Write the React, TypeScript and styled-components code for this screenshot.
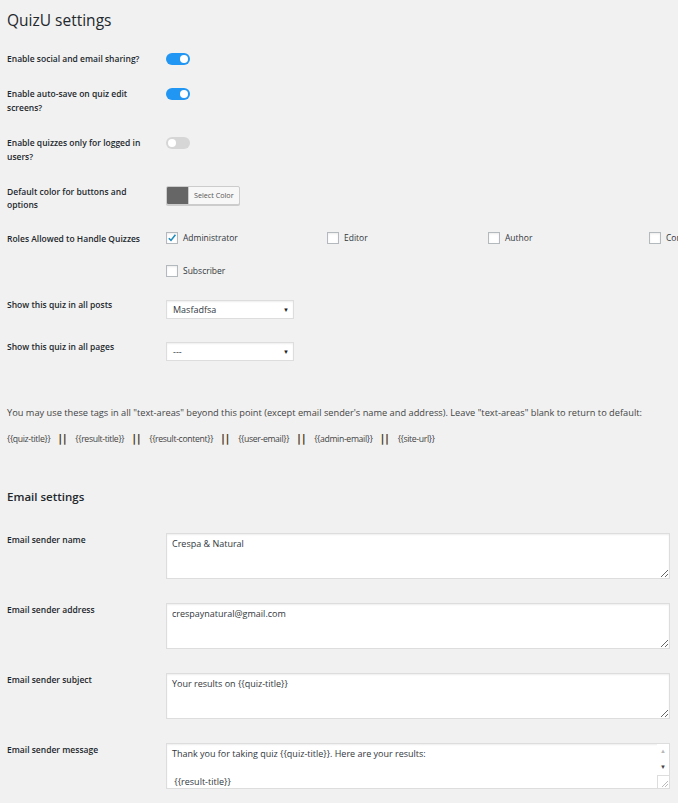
import React from 'react';
import styled, { createGlobalStyle } from 'styled-components';

const GlobalStyle = createGlobalStyle`
  html, body {
    margin: 0;
    padding: 0;
    background: #f1f1f1;
    overflow: hidden;
  }
  body {
    font-family: 'Open Sans', 'Noto Sans', sans-serif;
    color: #444;
  }
`;

const Page = styled.div`
  width: 700px;
  padding: 0 0 0 7px;
`;

const Title = styled.h1`
  margin: 0;
  padding-top: 8px;
  font-size: 15.5px;
  line-height: 24px;
  font-weight: 400;
  color: #23282d;
`;

const Form = styled.div`
  display: flex;
  flex-direction: column;
  gap: 21px;
  margin-top: 20px;
`;

const Row = styled.div`
  display: grid;
  grid-template-columns: 159px 1fr;
  align-items: start;
`;

const Label = styled.div<{ $tight?: boolean }>`
  font-size: 8.5px;
  line-height: ${(p) => (p.$tight ? '13px' : '14px')};
  font-weight: 600;
  color: #23282d;
  padding-right: 10px;
`;

const Toggle = styled.span<{ $on?: boolean }>`
  position: relative;
  display: block;
  width: 24px;
  height: 12px;
  margin-top: 1px;
  border-radius: 6px;
  background: ${(p) => (p.$on ? '#2196f3' : '#d6d6d6')};

  &::after {
    content: '';
    position: absolute;
    top: 2px;
    left: ${(p) => (p.$on ? '14px' : '2px')};
    width: 8px;
    height: 8px;
    border-radius: 50%;
    background: #fff;
  }
`;

const ColorButton = styled.div`
  display: inline-flex;
  align-items: stretch;
  height: 17px;
  margin-top: 1px;
  border: 1px solid #ccc;
  border-radius: 2px;
  background: #f7f7f7;
  box-shadow: 0 1px 0 #ccc;
  overflow: hidden;
`;

const Swatch = styled.span`
  width: 21px;
  background: #666;
`;

const ColorText = styled.span`
  padding: 0 5px;
  font-size: 7.2px;
  line-height: 17px;
  color: #555;
  border-left: 1px solid #ccc;
`;

const RoleGrid = styled.div`
  display: grid;
  grid-template-columns: repeat(4, 161px);
  row-gap: 21px;
`;

const Role = styled.label`
  display: flex;
  align-items: center;
  gap: 5px;
  font-size: 8.5px;
  line-height: 12px;
  color: #32373c;
  white-space: nowrap;
`;

const Box = styled.span`
  position: relative;
  width: 10px;
  height: 10px;
  border: 1px solid #b4b9be;
  background: #fff;
  box-shadow: inset 0 1px 2px rgba(0, 0, 0, 0.08);
`;

const Check = styled.svg`
  position: absolute;
  left: 0;
  top: 0;
`;

const Select = styled.div`
  display: flex;
  align-items: center;
  justify-content: space-between;
  box-sizing: border-box;
  width: 128px;
  height: 19px;
  margin-top: 2px;
  padding: 0 4px 0 6px;
  background: #fff;
  border: 1px solid #ddd;
  box-shadow: inset 0 1px 2px rgba(0, 0, 0, 0.07);
  font-size: 9px;
  color: #32373c;

  &::after {
    content: '▼';
    font-size: 6px;
    color: #222;
  }
`;

const Note = styled.p`
  margin: 45px 0 0;
  font-size: 9.25px;
  line-height: 14px;
  color: #444;
  white-space: nowrap;
`;

const Tags = styled.div`
  display: flex;
  align-items: center;
  gap: 8px;
  margin-top: 12px;
  font-size: 8.7px;
  letter-spacing: -0.35px;
  line-height: 14px;
  color: #444;
`;

const Bar = styled.b`
  font-family: 'DejaVu Sans', sans-serif;
  font-size: 11px;
  letter-spacing: 0.5px;
  font-weight: 700;
  color: #4d4124;
`;

const Heading = styled.h2`
  margin: 44px 0 0;
  font-size: 11.5px;
  line-height: 14px;
  font-weight: 600;
  color: #23282d;
`;

const EmailForm = styled.div`
  display: flex;
  flex-direction: column;
  gap: 24px;
  margin-top: 29px;
`;

const AreaWrap = styled.div`
  position: relative;
  width: 504px;
  height: 46px;
`;

const Area = styled.textarea`
  display: block;
  box-sizing: border-box;
  width: 504px;
  height: 46px;
  margin: 0;
  padding: 3px 5px;
  border: 1px solid #ddd;
  border-radius: 0;
  background: #fff;
  box-shadow: inset 0 1px 2px rgba(0, 0, 0, 0.07);
  font-family: 'Open Sans', 'Noto Sans', sans-serif;
  font-size: 9px;
  line-height: 14px;
  color: #32373c;
  overflow: hidden;
  resize: vertical;
`;

/* narrow scrollbar drawn over the message box */
const ScrollBar = styled.div`
  position: absolute;
  top: 1px;
  right: 1px;
  bottom: 1px;
  width: 12px;
  display: flex;
  flex-direction: column;
  align-items: center;
  background: #fff;
  font-size: 6px;
  line-height: 8px;
`;

const Arrow = styled.span<{ $dark?: boolean }>`
  margin-top: ${(p) => (p.$dark ? '8px' : '3px')};
  color: ${(p) => (p.$dark ? '#444' : '#b8b8b8')};
`;

const Corner = styled.span`
  margin-top: auto;
  width: 11px;
  height: 12px;
  border-top: 1px solid #ddd;
  border-left: 1px solid #ddd;
  background: #fff;
  display: flex;
  align-items: flex-end;
  justify-content: flex-end;
`;

const roles = ['Administrator', 'Editor', 'Author', 'Contributor', 'Subscriber'];
const tags = ['{{quiz-title}}', '{{result-title}}', '{{result-content}}', '{{user-email}}', '{{admin-email}}', '{{site-url}}'];

const App = (): JSX.Element => {
  return (
    <Page>
      <GlobalStyle />
      <Title>QuizU settings</Title>
      <Form>
        <Row>
          <Label>Enable social and email sharing?</Label>
          <Toggle $on />
        </Row>
        <Row>
          <Label>Enable auto-save on quiz edit screens?</Label>
          <Toggle $on />
        </Row>
        <Row>
          <Label>Enable quizzes only for logged in users?</Label>
          <Toggle />
        </Row>
        <Row>
          <Label $tight>Default color for buttons and options</Label>
          <div>
            <ColorButton>
              <Swatch />
              <ColorText>Select Color</ColorText>
            </ColorButton>
          </div>
        </Row>
        <Row>
          <Label>Roles Allowed to Handle Quizzes</Label>
          <RoleGrid>
            {roles.map((r) => (
              <Role key={r}>
                <Box>
                  {r === 'Administrator' && (
                    <Check width="10" height="10" viewBox="0 0 10 10">
                      <path d="M1.8 5.2 L4 7.4 L8.4 1.8" fill="none" stroke="#1e8cbe" strokeWidth="1.6" />
                    </Check>
                  )}
                </Box>
                {r}
              </Role>
            ))}
          </RoleGrid>
        </Row>
        <Row>
          <Label>Show this quiz in all posts</Label>
          <Select>Masfadfsa</Select>
        </Row>
        <Row>
          <Label>Show this quiz in all pages</Label>
          <Select>---</Select>
        </Row>
      </Form>
      <Note>
        You may use these tags in all "text-areas" beyond this point (except email sender's name and address). Leave "text-areas" blank to return to default:
      </Note>
      <Tags>
        {tags.map((t, i) => (
          <React.Fragment key={t}>
            {i > 0 && <Bar>||</Bar>}
            <span>{t}</span>
          </React.Fragment>
        ))}
      </Tags>
      <Heading>Email settings</Heading>
      <EmailForm>
        <Row>
          <Label>Email sender name</Label>
          <Area defaultValue="Crespa & Natural" />
        </Row>
        <Row>
          <Label>Email sender address</Label>
          <Area defaultValue="crespaynatural@gmail.com" />
        </Row>
        <Row>
          <Label>Email sender subject</Label>
          <Area defaultValue="Your results on {{quiz-title}}" />
        </Row>
        <Row>
          <Label>Email sender message</Label>
          <AreaWrap>
            <Area
              defaultValue={'Thank you for taking quiz {{quiz-title}}. Here are your results:\n\n {{result-title}}\n\n {{result-content}}'}
            />
            <ScrollBar>
              <Arrow>▲</Arrow>
              <Arrow $dark>▼</Arrow>
              <Corner>
                <svg width="8" height="8" viewBox="0 0 8 8">
                  <path d="M7 1 L1 7 M7 4 L4 7" stroke="#aaa" strokeWidth="0.8" />
                </svg>
              </Corner>
            </ScrollBar>
          </AreaWrap>
        </Row>
      </EmailForm>
    </Page>
  );
};

export default App;
